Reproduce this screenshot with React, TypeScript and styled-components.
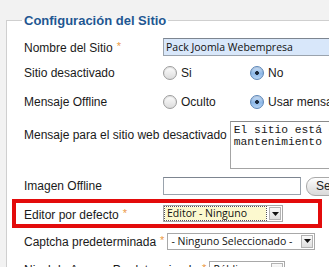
import styled, { createGlobalStyle } from "styled-components";

const GlobalStyle = createGlobalStyle`
  html, body {
    margin: 0;
    padding: 0;
    background: #f2f2f2;
    overflow: hidden;
  }
  body {
    font-family: "Liberation Sans", Arial, sans-serif;
    font-size: 12px;
    color: #1a1a1a;
  }
`;

const Fieldset = styled.fieldset`
  margin: 13px 0 0 6px;
  padding: 0 0 20px 5px;
  width: 520px;
  border: 1px solid #cfcfcf;
  background: #fff;
`;

const Legend = styled.legend`
  margin-left: 10px;
  padding: 0 2px;
  font-size: 13px;
  font-weight: bold;
  line-height: 15px;
  color: #1f5792;
`;

const Row = styled.div<{ h: number; top?: boolean; marked?: boolean }>`
  display: flex;
  align-items: ${(p) => (p.top ? "flex-start" : "center")};
  height: ${(p) => p.h}px;
  padding-left: 12px;
  width: ${(p) => (p.marked ? "310px" : "auto")};
  box-sizing: border-box;
  white-space: nowrap;
  outline: ${(p) => (p.marked ? "4px solid #e30b0b" : "none")};
  outline-offset: -4px;
  & > * {
    flex-shrink: 0;
  }
`;

const Label = styled.label<{ pad?: number }>`
  min-width: 136px;
  margin-right: 3px;
  padding-top: ${(p) => p.pad || 0}px;
  line-height: 14px;
`;

const Star = styled.span`
  color: #ec9a45;
  font-size: 11px;
  margin-left: 4px;
  vertical-align: 2px;
`;

const TextInput = styled.div<{ w: number; tint?: boolean }>`
  width: ${(p) => p.w}px;
  height: 16px;
  border: 1px solid #9aa3ad;
  border-top-color: #7d8590;
  background: ${(p) => (p.tint ? "#d8e7fa" : "#fff")};
  font-family: "Open Sans", "DejaVu Sans", sans-serif;
  font-size: 10.5px;
  line-height: 16px;
  padding-left: 2px;
  color: #111;
  overflow: hidden;
`;

const Option = styled.span`
  display: flex;
  align-items: center;
  width: 87px;
  font-size: 12px;
`;

const Radio = styled.span<{ on?: boolean }>`
  width: 12px;
  height: 12px;
  border-radius: 50%;
  margin-right: 4px;
  flex-shrink: 0;
  border: 1px solid ${(p) => (p.on ? "#5c86b8" : "#9c9c9c")};
  background: ${(p) =>
    p.on
      ? "radial-gradient(circle at 50% 50%, #1c2a3c 0 1.6px, transparent 2.2px), linear-gradient(#cfe2f8, #8db8e8 55%, #b7d5f5)"
      : "linear-gradient(#fdfdfd, #dcdcdc)"};
  box-shadow: inset 0 1px 1px rgba(0, 0, 0, 0.12);
`;

const Area = styled.div`
  margin-top: 3px;
  width: 140px;
  height: 44px;
  border: 1px solid #a4a4a4;
  border-top-color: #8a8a8a;
  padding: 2px 0 0 3px;
  font-family: "Liberation Mono", "Courier New", monospace;
  font-size: 11.3px;
  line-height: 12px;
  white-space: pre;
  overflow: hidden;
`;

const Button = styled.div`
  margin-left: 5px;
  height: 17px;
  padding: 0 9px;
  border: 1px solid #a9a9a9;
  border-radius: 9px;
  background: linear-gradient(#ffffff, #e6e6e6 60%, #dadada);
  font-size: 12px;
  line-height: 17px;
  color: #222;
`;

const Select = styled.div<{ w: number }>`
  display: flex;
  align-items: center;
  width: ${(p) => p.w}px;
  height: 15px;
  border: 1px solid #a8a8a8;
  background: #fff;
  font-family: "Open Sans", "DejaVu Sans", sans-serif;
  font-size: 10.5px;
  color: #111;
`;

const SelectText = styled.span<{ tint?: boolean }>`
  flex: 1;
  height: 13px;
  margin: 1px 3px 1px 1px;
  padding-left: 2px;
  line-height: 13px;
  overflow: hidden;
  background: ${(p) => (p.tint ? "#fcf9cf" : "transparent")};
  outline: ${(p) => (p.tint ? "1px dotted #555" : "none")};
`;

const Arrow = styled.span`
  display: flex;
  align-items: center;
  justify-content: center;
  width: 12px;
  height: 13px;
  margin-right: 1px;
  border: 1px solid #b3b3b3;
  background: linear-gradient(#fafafa, #dedede);
  box-sizing: border-box;
`;

const DropSelect = ({ w, text, tint }: { w: number; text: string; tint?: boolean }) => (
  <Select w={w}>
    <SelectText tint={tint}>{text}</SelectText>
    <Arrow>
      <svg width="7" height="4" viewBox="0 0 7 4">
        <path d="M0 0h7L3.5 4z" fill="#111" />
      </svg>
    </Arrow>
  </Select>
);

export default function App() {
  return (
    <>
      <GlobalStyle />
      <Fieldset>
        <Legend>Configuración del Sitio</Legend>
        <Row h={26} style={{ marginTop: 6 }}>
          <Label>
            Nombre del Sitio<Star>*</Star>
          </Label>
          <TextInput w={200} tint>
            Pack Joomla Webempresa
          </TextInput>
        </Row>
        <Row h={25}>
          <Label>Sitio desactivado</Label>
          <Option>
            <Radio />
            Si
          </Option>
          <Option>
            <Radio on />
            No
          </Option>
        </Row>
        <Row h={33}>
          <Label>Mensaje Offline</Label>
          <Option>
            <Radio />
            Oculto
          </Option>
          <Option>
            <Radio on />
            Usar mensaje personalizado
          </Option>
        </Row>
        <Row h={55} top>
          <Label pad={10}>Mensaje para el sitio web desactivado</Label>
          <Area>{"El sitio está en\nmantenimiento"}</Area>
        </Row>
        <Row h={26}>
          <Label>Imagen Offline</Label>
          <TextInput w={134} />
          <Button>Seleccionar</Button>
        </Row>
        <Row h={29} marked>
          <Label>
            Editor por defecto<Star>*</Star>
          </Label>
          <DropSelect w={118} text="Editor - Ninguno" tint />
        </Row>
        <Row h={26}>
          <Label>
            Captcha predeterminada<Star>*</Star>
          </Label>
          <DropSelect w={146} text="- Ninguno Seleccionado -" />
        </Row>
        <Row h={30}>
          <Label>
            Nivel de Acceso Predeterminado<Star>*</Star>
          </Label>
          <DropSelect w={74} text="Público" />
        </Row>
      </Fieldset>
    </>
  );
}
